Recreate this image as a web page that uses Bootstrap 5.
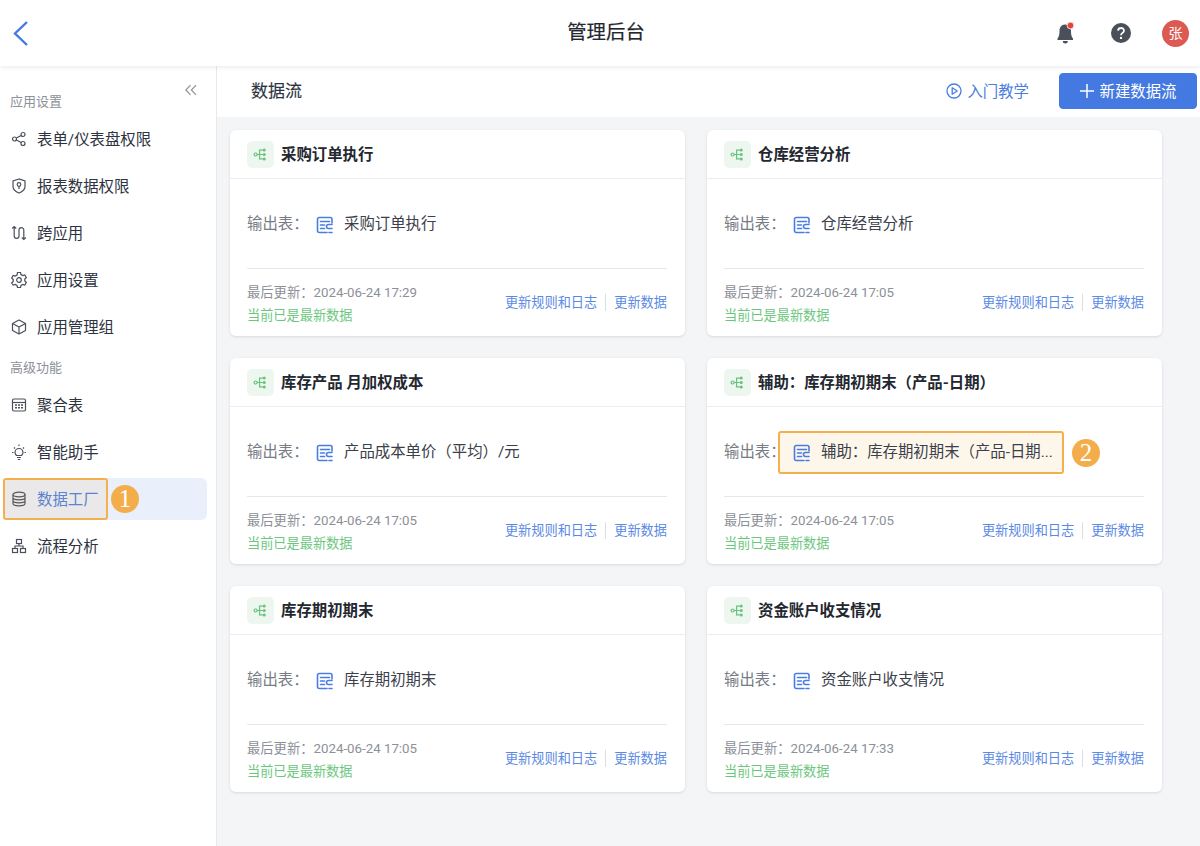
<!DOCTYPE html>
<html lang="zh-CN">
<head>
<meta charset="utf-8">
<title>管理后台</title>
<link rel="stylesheet" href="https://cdn.jsdelivr.net/npm/bootstrap@5.3.0/dist/css/bootstrap.min.css">
<style>
html,body{height:100%;}
body{width:1200px;height:846px;overflow:hidden;font-family:Roboto,"Noto Sans CJK SC",sans-serif;background:#fff;color:#2d3340;}
.topbar{height:66px;background:#fff;box-shadow:0 1px 5px rgba(0,0,0,.09);position:relative;z-index:3;padding:0 11px 0 12px;}
.topbar-title{font-size:19.4px;font-weight:400;color:#23272f;left:0;right:-12px;top:20px;line-height:26px;text-align:center;-webkit-text-stroke:.2px #23272f;}
.ico-bell{margin-right:35px;margin-top:1px;}
.ico-help{margin-right:31px;}
.avatar{width:27px;height:27px;background:#dd5a52;color:#fff;font-size:14px;}
.page-body{height:780px;}
.side{width:217px;border-right:1px solid #e8e9ec;flex:none;padding-top:3px;}
.collapse-btn{right:19px;top:18px;line-height:0;}
.side-label{font-size:13px;color:#8d9199;height:24px;line-height:24px;padding-left:10px;margin-top:21px;}
.side-label.second{margin-top:8px;}
.side-item{height:42px;margin:0 9px 5px 3px;padding-left:8px;padding-top:3px;font-size:15.4px;color:#2d3340;border-radius:6px;gap:10px;}
.side-item svg{flex:none;margin-top:-3px;}
.side-list{margin-top:4px;}
.side-list-two{margin-top:4px;}
.side-item.on{background:#e9f0fb;color:#4a7de2;}
.hl-box{left:0;top:0;width:105px;height:42px;border:2px solid #f4b04f;border-radius:3px;background:rgba(244,176,79,.11);}
.num-dot{width:28px;height:28px;background:#f4ad4b;color:#fff;font-family:"Liberation Serif",serif;font-size:25px;line-height:28px;text-align:center;}
.dot-one{left:108px;top:7px;}
.main-pane{background:#f4f5f7;}
.tool{height:51px;background:#fff;padding:0 3px 1px 34px;}
.tool-title{font-size:17px;font-weight:400;color:#2d3340;-webkit-text-stroke:.15px #2d3340;padding-top:1px;}
.learn{font-size:15.4px;color:#4a7de2;gap:5px;margin-right:30px;padding-top:3px;}
.learn svg{margin-top:-3px;}
.new-btn{background:#4379e0;border-color:#4379e0;color:#fff;width:138px;height:36px;font-size:15.4px;padding:3px 0 0;border-radius:4px;gap:6px;}
.new-btn svg{margin-top:-3px;}
.flow-grid{display:grid;grid-template-columns:455px 455px;column-gap:22px;row-gap:22px;padding:13px 0 0 13px;}
.flow-card{height:206px;border:0;border-radius:6px;box-shadow:0 1px 3px rgba(20,30,50,.13);background:#fff;}
.flow-head{height:49px;padding:4px 17px 0;gap:7px;border-bottom:1px solid #ebedf0;font-size:15.4px;font-weight:700;color:#23272f;}
.flow-ico{width:27px;height:27px;background:#edf7ef;border-radius:5px;margin-top:-4px;}
.flow-main{height:90px;margin:0 18px 0 17px;border-bottom:1px solid #e6e8eb;font-size:15.4px;color:#777c85;padding-top:2px;}
.out-label{width:54px;flex:none;white-space:nowrap;}
.out-val{color:#3b404a;gap:10px;margin-left:15px;height:43px;}
.out-val.marked{background:#fdf6ea;border:2px solid #f4b04f;border-radius:3px;width:286px;margin-left:0;padding-left:13px;flex:none;white-space:nowrap;}
.dot-two{left:365px;top:81px;}
.flow-foot{padding:0 18px 0 17px;height:67px;}
.meta-date{font-size:13.3px;line-height:23px;color:#8c9098;}
.meta-ok{font-size:13.2px;line-height:23px;color:#6cc77e;}
.meta-wrap{padding-top:2px;}
.foot-links{font-size:13.2px;}
.foot-links a{color:#5b8ae4;text-decoration:none;}
.foot-sep{width:1px;height:17px;background:#dcdee2;margin:0 8px;}
</style>
</head>
<body>
<svg width="0" height="0" class="position-absolute">
  <symbol id="flow" viewBox="0 0 16 16">
    <g fill="none" stroke="#67c27c" stroke-width="1.300"><circle cx="2.800" cy="8" r="1.600"/><path d="M4.400 8h6M7 8V3.300h3.500M7 8v4.700h3.500"/></g>
    <g fill="#67c27c"><circle cx="12" cy="3.300" r="1.600"/><circle cx="12" cy="8" r="1.600"/><circle cx="12" cy="12.700" r="1.600"/></g>
  </symbol>
  <symbol id="tbl" viewBox="0 0 18 18">
    <g fill="none" stroke="#4a7de2" stroke-width="1.600" stroke-linecap="round" stroke-linejoin="round"><path d="M16 7V3.200A1.700 1.700 0 0 0 14.300 1.500H3.200A1.700 1.700 0 0 0 1.500 3.200v11.600A1.700 1.700 0 0 0 3.200 16.500H11"/><path d="M4.500 5.500h9M4.500 9h4M4.500 12.500h4M16 8.500h-3.500a1.800 1.800 0 0 0 0 4H16M13 16.500h3"/></g>
  </symbol>
</svg>

<header class="topbar d-flex align-items-center justify-content-between">
  <svg width="17" height="27" viewBox="0 0 17 27"><path d="M15 2 3 13.500 15 25" fill="none" stroke="#4379e0" stroke-width="2.400"/></svg>
  <div class="topbar-title position-absolute">管理后台</div>
  <div class="d-flex align-items-center">
    <svg class="ico-bell" width="20" height="23" viewBox="0 0 20 23"><path d="M9 2.500c-3.700 0-5.500 3-5.500 6.500 0 3.500-.6 6-2 7.500v1.500h15.500v-1.500c-1.500-1.500-2-4-2-7.500 0-3.500-2-6.500-6-6.500z" fill="#4a4f5a"/><path d="M6.800 19h5a2.500 2.500 0 0 1-5 0z" fill="#4a4f5a"/><circle cx="14.500" cy="3.500" r="3.400" fill="#e2453c" stroke="#fff" stroke-width=".8"/></svg>
    <svg class="ico-help" width="20" height="20" viewBox="0 0 20 20"><circle cx="10" cy="10" r="10" fill="#4a4f5a"/><path d="M7 7.600A3 3 0 0 1 10 5a2.800 2.800 0 0 1 3 2.700c0 2.100-3 2.300-3 4.500" fill="none" stroke="#fff" stroke-width="1.800"/><circle cx="10" cy="14.900" r="1.200" fill="#fff"/></svg>
    <div class="avatar rounded-circle d-flex align-items-center justify-content-center">张</div>
  </div>
</header>

<div class="page-body d-flex">
  <aside class="side position-relative">
    <div class="collapse-btn position-absolute">
      <svg width="12" height="12" viewBox="0 0 13 12"><path d="M6 .8.900 6 6 11.200M12 .8 6.900 6 12 11.200" fill="none" stroke="#8a8f98" stroke-width="1.200"/></svg>
    </div>
    <div class="side-label">应用设置</div>
    <div class="side-list">
      <div class="side-item d-flex align-items-center"><svg width="16" height="16" viewBox="0 0 16 16"><g fill="none" stroke="#4a4f5a" stroke-width="1.200"><circle cx="3.500" cy="8" r="2"/><circle cx="12" cy="3.500" r="2"/><circle cx="12" cy="12.500" r="2"/><path d="M5.300 7 10.200 4.500M5.300 9l4.900 2.500"/></g></svg>表单/仪表盘权限</div>
      <div class="side-item d-flex align-items-center"><svg width="16" height="16" viewBox="0 0 16 16"><g fill="none" stroke="#4a4f5a" stroke-width="1.200"><path d="M8 1 2 3v5.500c0 3 3 5.300 6 6.500 3-1.200 6-3.500 6-6.500V3z"/><circle cx="8" cy="6.500" r="1.800"/><path d="M8 8.300v2.700"/></g></svg>报表数据权限</div>
      <div class="side-item d-flex align-items-center"><svg width="16" height="16" viewBox="0 0 16 16"><g fill="none" stroke="#4a4f5a" stroke-width="1.200"><path d="M3.200 1.500V11a2.400 2.400 0 0 0 4.800 0V5a2.400 2.400 0 0 1 4.800 0v9.500M1.200 3.500l2-2 2 2M10.800 12.500l2 2 2-2"/></g></svg>跨应用</div>
      <div class="side-item d-flex align-items-center"><svg width="16" height="16" viewBox="0 0 16 16"><g fill="none" stroke="#4a4f5a" stroke-width="1.200"><path d="M6.500 1h3l.5 2 1.800 1 2-.6 1.500 2.600-1.500 1.500v2l1.500 1.500-1.500 2.600-2-.6-1.800 1-.5 2h-3l-.5-2-1.800-1-2 .6L.700 11.500 2.200 10V8L.700 6.500 2.200 3.900l2 .6L6 3.500z" transform="translate(0 -.500)"/><circle cx="8" cy="8" r="2.300"/></g></svg>应用设置</div>
      <div class="side-item d-flex align-items-center"><svg width="16" height="16" viewBox="0 0 16 16"><g fill="none" stroke="#4a4f5a" stroke-width="1.200" stroke-linejoin="round"><path d="M8 1 14.500 4.500v7L8 15l-6.500-3.500v-7z"/><path d="M1.500 4.500 8 8l6.500-3.500M8 8v7"/></g></svg>应用管理组</div>
    </div>
    <div class="side-label second">高级功能</div>
    <div class="side-list-two">
      <div class="side-item d-flex align-items-center"><svg width="16" height="16" viewBox="0 0 16 16"><g fill="none" stroke="#4a4f5a" stroke-width="1.200"><rect x="1.500" y="2" width="13" height="12" rx="1.500"/><path d="M1.500 5.500h13"/></g><g fill="#4a4f5a"><rect x="4" y="7.300" width="2" height="1.500"/><rect x="7" y="7.300" width="2" height="1.500"/><rect x="10" y="7.300" width="2" height="1.500"/><rect x="4" y="10" width="2" height="1.500"/><rect x="7" y="10" width="2" height="1.500"/><rect x="10" y="10" width="2" height="1.500"/></g></svg>聚合表</div>
      <div class="side-item d-flex align-items-center"><svg width="16" height="17" viewBox="0 0 16 17"><g fill="none" stroke="#4a4f5a" stroke-width="1.200"><path d="M5.500 11.500C4.500 10.500 4 9.700 4 8.500a4 4 0 0 1 8 0c0 1.200-.500 2-1.500 3zM6 13.500h4M6.800 15.500h2.400M8 .5v1.500M1 8.500h1.500M13.500 8.500H15M3 3.500l1 1M13 3.500l-1 1"/></g></svg>智能助手</div>
      <div class="side-item on d-flex align-items-center position-relative"><svg width="16" height="16" viewBox="0 0 16 16"><g fill="none" stroke="#4a4f5a" stroke-width="1.200"><ellipse cx="8" cy="3.500" rx="6" ry="2.300"/><path d="M2 3.500v9c0 1.300 2.700 2.300 6 2.300s6-1 6-2.300v-9M2 6.500c0 1.300 2.700 2.300 6 2.300s6-1 6-2.300M2 9.500c0 1.300 2.700 2.300 6 2.300s6-1 6-2.300"/></g></svg>数据工厂
        <span class="hl-box position-absolute"></span>
        <span class="num-dot rounded-circle position-absolute dot-one">1</span>
      </div>
      <div class="side-item d-flex align-items-center"><svg width="16" height="16" viewBox="0 0 16 16"><g fill="none" stroke="#4a4f5a" stroke-width="1.200"><rect x="5.500" y="1.500" width="5" height="4"/><rect x="1.500" y="10.500" width="5" height="4"/><rect x="9.500" y="10.500" width="5" height="4"/><path d="M8 5.500V8M4 10.500V8h8v2.500"/></g></svg>流程分析</div>
    </div>
  </aside>

  <main class="main-pane flex-grow-1">
    <div class="tool d-flex align-items-center justify-content-between">
      <div class="tool-title">数据流</div>
      <div class="d-flex align-items-center">
        <div class="learn d-flex align-items-center"><svg width="16" height="16" viewBox="0 0 16 16"><circle cx="8" cy="8" r="7" fill="none" stroke="#4a7de2" stroke-width="1.300"/><path d="M6.200 4.800v6.400L11.200 8z" fill="none" stroke="#4a7de2" stroke-width="1.300" stroke-linejoin="round"/></svg>入门教学</div>
        <button class="btn new-btn d-flex align-items-center justify-content-center"><svg width="14" height="14" viewBox="0 0 14 14"><path d="M7 0v14M0 7h14" stroke="#fff" stroke-width="1.500"/></svg>新建数据流</button>
      </div>
    </div>
    <div class="flow-grid">

      <div class="card flow-card">
        <div class="flow-head d-flex align-items-center"><span class="flow-ico d-flex align-items-center justify-content-center"><svg width="15" height="15"><use href="#flow"/></svg></span>采购订单执行</div>
        <div class="flow-main d-flex align-items-center"><span class="out-label">输出表：</span><span class="out-val d-flex align-items-center"><svg width="18" height="18"><use href="#tbl"/></svg>采购订单执行</span></div>
        <div class="flow-foot d-flex justify-content-between align-items-center">
          <div class="meta-wrap"><div class="meta-date">最后更新：2024-06-24 17:29</div><div class="meta-ok">当前已是最新数据</div></div>
          <div class="foot-links d-flex align-items-center"><a href="#">更新规则和日志</a><span class="foot-sep"></span><a href="#">更新数据</a></div>
        </div>
      </div>

      <div class="card flow-card">
        <div class="flow-head d-flex align-items-center"><span class="flow-ico d-flex align-items-center justify-content-center"><svg width="15" height="15"><use href="#flow"/></svg></span>仓库经营分析</div>
        <div class="flow-main d-flex align-items-center"><span class="out-label">输出表：</span><span class="out-val d-flex align-items-center"><svg width="18" height="18"><use href="#tbl"/></svg>仓库经营分析</span></div>
        <div class="flow-foot d-flex justify-content-between align-items-center">
          <div class="meta-wrap"><div class="meta-date">最后更新：2024-06-24 17:05</div><div class="meta-ok">当前已是最新数据</div></div>
          <div class="foot-links d-flex align-items-center"><a href="#">更新规则和日志</a><span class="foot-sep"></span><a href="#">更新数据</a></div>
        </div>
      </div>

      <div class="card flow-card">
        <div class="flow-head d-flex align-items-center"><span class="flow-ico d-flex align-items-center justify-content-center"><svg width="15" height="15"><use href="#flow"/></svg></span>库存产品 月加权成本</div>
        <div class="flow-main d-flex align-items-center"><span class="out-label">输出表：</span><span class="out-val d-flex align-items-center"><svg width="18" height="18"><use href="#tbl"/></svg>产品成本单价（平均）/元</span></div>
        <div class="flow-foot d-flex justify-content-between align-items-center">
          <div class="meta-wrap"><div class="meta-date">最后更新：2024-06-24 17:05</div><div class="meta-ok">当前已是最新数据</div></div>
          <div class="foot-links d-flex align-items-center"><a href="#">更新规则和日志</a><span class="foot-sep"></span><a href="#">更新数据</a></div>
        </div>
      </div>

      <div class="card flow-card position-relative">
        <div class="flow-head d-flex align-items-center"><span class="flow-ico d-flex align-items-center justify-content-center"><svg width="15" height="15"><use href="#flow"/></svg></span>辅助：库存期初期末（产品-日期）</div>
        <div class="flow-main d-flex align-items-center"><span class="out-label">输出表：</span><span class="out-val marked d-flex align-items-center"><svg width="18" height="18"><use href="#tbl"/></svg>辅助：库存期初期末（产品-日期...</span></div>
        <span class="num-dot rounded-circle position-absolute dot-two">2</span>
        <div class="flow-foot d-flex justify-content-between align-items-center">
          <div class="meta-wrap"><div class="meta-date">最后更新：2024-06-24 17:05</div><div class="meta-ok">当前已是最新数据</div></div>
          <div class="foot-links d-flex align-items-center"><a href="#">更新规则和日志</a><span class="foot-sep"></span><a href="#">更新数据</a></div>
        </div>
      </div>

      <div class="card flow-card">
        <div class="flow-head d-flex align-items-center"><span class="flow-ico d-flex align-items-center justify-content-center"><svg width="15" height="15"><use href="#flow"/></svg></span>库存期初期末</div>
        <div class="flow-main d-flex align-items-center"><span class="out-label">输出表：</span><span class="out-val d-flex align-items-center"><svg width="18" height="18"><use href="#tbl"/></svg>库存期初期末</span></div>
        <div class="flow-foot d-flex justify-content-between align-items-center">
          <div class="meta-wrap"><div class="meta-date">最后更新：2024-06-24 17:05</div><div class="meta-ok">当前已是最新数据</div></div>
          <div class="foot-links d-flex align-items-center"><a href="#">更新规则和日志</a><span class="foot-sep"></span><a href="#">更新数据</a></div>
        </div>
      </div>

      <div class="card flow-card">
        <div class="flow-head d-flex align-items-center"><span class="flow-ico d-flex align-items-center justify-content-center"><svg width="15" height="15"><use href="#flow"/></svg></span>资金账户收支情况</div>
        <div class="flow-main d-flex align-items-center"><span class="out-label">输出表：</span><span class="out-val d-flex align-items-center"><svg width="18" height="18"><use href="#tbl"/></svg>资金账户收支情况</span></div>
        <div class="flow-foot d-flex justify-content-between align-items-center">
          <div class="meta-wrap"><div class="meta-date">最后更新：2024-06-24 17:33</div><div class="meta-ok">当前已是最新数据</div></div>
          <div class="foot-links d-flex align-items-center"><a href="#">更新规则和日志</a><span class="foot-sep"></span><a href="#">更新数据</a></div>
        </div>
      </div>

    </div>
  </main>
</div>
<script src="https://cdn.jsdelivr.net/npm/bootstrap@5.3.0/dist/js/bootstrap.bundle.min.js"></script>
</body>
</html>
